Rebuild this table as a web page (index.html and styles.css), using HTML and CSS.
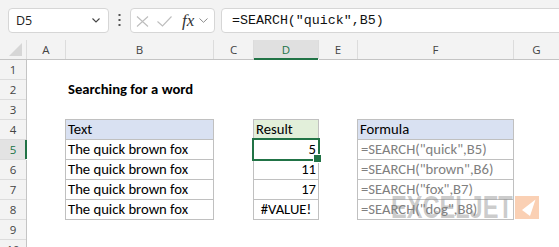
FILE: index.html
```html
<!DOCTYPE html>
<html>
<head>
<meta charset="utf-8">
<link rel="stylesheet" href="styles.css">
</head>
<body>
<div class="topbar">
  <div class="namebox"><span>D5</span>
    <svg class="nb-chev" width="8" height="5" viewBox="0 0 8 5"><path d="M0.5 0.5 L4 4 L7.5 0.5" fill="none" stroke="#444" stroke-width="1.1"/></svg>
  </div>
  <div class="dots"><svg width="3" height="13" viewBox="0 0 3 13"><rect x="0.5" y="0" width="2" height="2" fill="#555"/><rect x="0.5" y="5" width="2" height="2" fill="#555"/><rect x="0.5" y="10" width="2" height="2" fill="#555"/></svg></div>
  <div class="fxbox">
    <svg class="ic-x" width="13" height="11" viewBox="0 0 13 11"><path d="M1 0.5 L12 10.5 M12 0.5 L1 10.5" fill="none" stroke="#bdbdbd" stroke-width="1.1"/></svg>
    <svg class="ic-ok" width="15" height="11" viewBox="0 0 15 11"><path d="M0.5 5.5 L5.5 10 L14.5 0.5" fill="none" stroke="#bdbdbd" stroke-width="1.1"/></svg>
    <span class="fx">fx</span>
    <svg class="ic-chev" width="9" height="5" viewBox="0 0 9 5"><path d="M0.5 0.5 L4.5 4.3 L8.5 0.5" fill="none" stroke="#8a8a8a" stroke-width="1"/></svg>
  </div>
  <div class="formula">=SEARCH("quick",B5)</div>
</div>

<div class="sheet">
  <div class="h corner"><svg width="14" height="14" viewBox="0 0 14 14"><path d="M13 0 L13 13 L0 13 Z" fill="#d6d6d6"/></svg></div>
  <div class="h">A</div><div class="h">B</div><div class="h">C</div><div class="h hsel">D</div><div class="h">E</div><div class="h">F</div><div class="h">G</div>

  <div class="rh">1</div><div class="c"></div><div class="c"></div><div class="c"></div><div class="c"></div><div class="c"></div><div class="c"></div><div class="c"></div>
  <div class="rh">2</div><div class="c"></div><div class="c title">Searching for a word</div><div class="c"></div><div class="c"></div><div class="c"></div><div class="c"></div><div class="c"></div>
  <div class="rh">3</div><div class="c"></div><div class="c"></div><div class="c"></div><div class="c"></div><div class="c"></div><div class="c"></div><div class="c"></div>
  <div class="rh">4</div><div class="c"></div><div class="c b blue">Text</div><div class="c"></div><div class="c b green">Result</div><div class="c"></div><div class="c b blue">Formula</div><div class="c"></div>
  <div class="rh rsel">5</div><div class="c"></div><div class="c b">The quick brown fox</div><div class="c"></div><div class="c b r sel">5</div><div class="c"></div><div class="c b f">=SEARCH("quick",B5)</div><div class="c"></div>
  <div class="rh">6</div><div class="c"></div><div class="c b">The quick brown fox</div><div class="c"></div><div class="c b r">11</div><div class="c"></div><div class="c b f">=SEARCH("brown",B6)</div><div class="c"></div>
  <div class="rh">7</div><div class="c"></div><div class="c b">The quick brown fox</div><div class="c"></div><div class="c b r">17</div><div class="c"></div><div class="c b f">=SEARCH("fox",B7)</div><div class="c"></div>
  <div class="rh">8</div><div class="c"></div><div class="c b">The quick brown fox</div><div class="c"></div><div class="c b ctr">#VALUE!</div><div class="c"></div><div class="c b f">=SEARCH("dog",B8)</div><div class="c"></div>
  <div class="rh">9</div><div class="c"></div><div class="c"></div><div class="c"></div><div class="c"></div><div class="c"></div><div class="c"></div><div class="c"></div>
  <div class="rh">10</div><div class="c"></div><div class="c"></div><div class="c"></div><div class="c"></div><div class="c"></div><div class="c"></div><div class="c"></div>
</div>

<div class="watermark">
  <span class="wm-text">EXCELJET</span>
  <div class="wm-logo"><svg width="24" height="23" viewBox="0 0 24 23"><path d="M20.5 3.5 L7 14 L15 20 Z" fill="#fff"/></svg></div>
</div>
</body>
</html>
```

FILE: styles.css
```css
* { box-sizing: border-box; margin: 0; padding: 0; }
html, body { width: 559px; height: 247px; overflow: hidden; background: #fff; }
body {
  margin: 0;
  position: relative;
  font-family: Carlito, Calibri, Lato, sans-serif;
  color: #000;
}

/* formula bar */
.topbar {
  height: 40px;
  background: #f3f3f3;
  display: flex;
  align-items: flex-start;
  padding: 8px 0 0 8px;
}
.namebox {
  width: 101px;
  height: 25px;
  background: #fff;
  border: 1px solid #d6d6d6;
  border-radius: 4px;
  display: flex;
  align-items: center;
  justify-content: space-between;
  padding: 0 8px 0 7px;
  font-family: "Open Sans", "Noto Sans", sans-serif;
  font-size: 12.5px;
  color: #222;
}
.dots {
  width: 21px;
  height: 25px;
  display: flex;
  align-items: center;
  justify-content: center;
}
.fxbox {
  width: 85px;
  height: 25px;
  background: #fff;
  border: 1px solid #d6d6d6;
  border-radius: 4px;
  display: flex;
  align-items: center;
  padding-left: 5px;
}
.ic-x { margin-top: 2px; }
.ic-ok { margin-left: 8px; margin-top: 2px; }
.fx {
  margin-left: 10px;
  font-family: "Liberation Serif", serif;
  font-style: italic;
  font-size: 17px;
  color: #333;
  line-height: 1;
}
.ic-chev { margin-left: 5px; }
.formula {
  flex: 1;
  margin-left: 6px;
  margin-right: -10px;
  height: 25px;
  background: #fff;
  border: 1px solid #d6d6d6;
  border-radius: 4px;
  display: flex;
  align-items: center;
  padding-left: 10px;
  font-family: "Liberation Mono", monospace;
  font-size: 13.3px;
  color: #111;
}

/* sheet */
.sheet {
  display: grid;
  grid-template-columns: 26px 38px 147px 39px 64px 38px 155px 45px;
  grid-auto-rows: 19px;
  gap: 1px;
  background: #fff;
}
.h {
  background: #f3f3f3;
  display: flex;
  align-items: center;
  justify-content: center;
  font-family: "Open Sans", "Noto Sans", sans-serif;
  font-size: 11.5px;
  color: #444;
  box-shadow: 1px 0 0 #dcdcdc, 0 1px 0 #c4c4c4, 1px 1px 0 #c4c4c4;
}
.corner { align-items: flex-end; justify-content: flex-end; padding: 0 3px 2px 0; }
.corner svg { display: block; }
.hsel {
  background: #e0e0e0;
  color: #217346;
  box-shadow: inset 0 -1px 0 #217346, 1px 0 0 #dcdcdc, 0 1px 0 #217346;
}
.rh {
  background: #f3f3f3;
  display: flex;
  align-items: center;
  justify-content: center;
  font-family: "Open Sans", "Noto Sans", sans-serif;
  font-size: 11.5px;
  color: #444;
  box-shadow: 0 1px 0 #dcdcdc, 1px 0 0 #c4c4c4, 1px 1px 0 #c4c4c4;
}
.rsel {
  background: #e3e3e3;
  color: #217346;
  box-shadow: inset -1px 0 0 #217346, 1px 0 0 #217346, 0 1px 0 #dcdcdc;
}
.c {
  display: flex;
  align-items: center;
  padding: 0 2px;
  font-size: 14.67px;
  line-height: 19px;
  white-space: nowrap;
}
.title { font-weight: bold; }
.b { box-shadow: 0 0 0 1px #c0c0c0; }
.blue { background: #d9e1f2; }
.green { background: #e2efda; }
.r { justify-content: flex-end; }
.ctr { justify-content: center; }
.f { color: #808080; padding-left: 3px; }
.sel {
  position: relative;
  z-index: 2;
  box-shadow: 0 0 0 2px #217346;
}
.sel::after {
  content: "";
  position: absolute;
  right: -4px;
  bottom: -4px;
  width: 7px;
  height: 7px;
  background: #217346;
  border: 1px solid #fff;
}

/* watermark */
.watermark {
  position: absolute;
  left: 391px;
  top: 192px;
  display: flex;
  align-items: flex-start;
  pointer-events: none;
  z-index: 3;
}
.wm-text {
  display: block;
  width: 124px;
  font-family: "Liberation Sans", sans-serif;
  font-weight: 900;
  font-size: 31px;
  line-height: 31px;
  color: rgba(130, 130, 130, 0.42);
  transform: scaleX(0.76);
  transform-origin: left top;
  white-space: nowrap;
}
.wm-logo {
  margin-top: 4px;
  width: 24px;
  height: 23px;
  background: rgba(240, 120, 40, 0.35);
}
.wm-logo svg { display: block; }
```
